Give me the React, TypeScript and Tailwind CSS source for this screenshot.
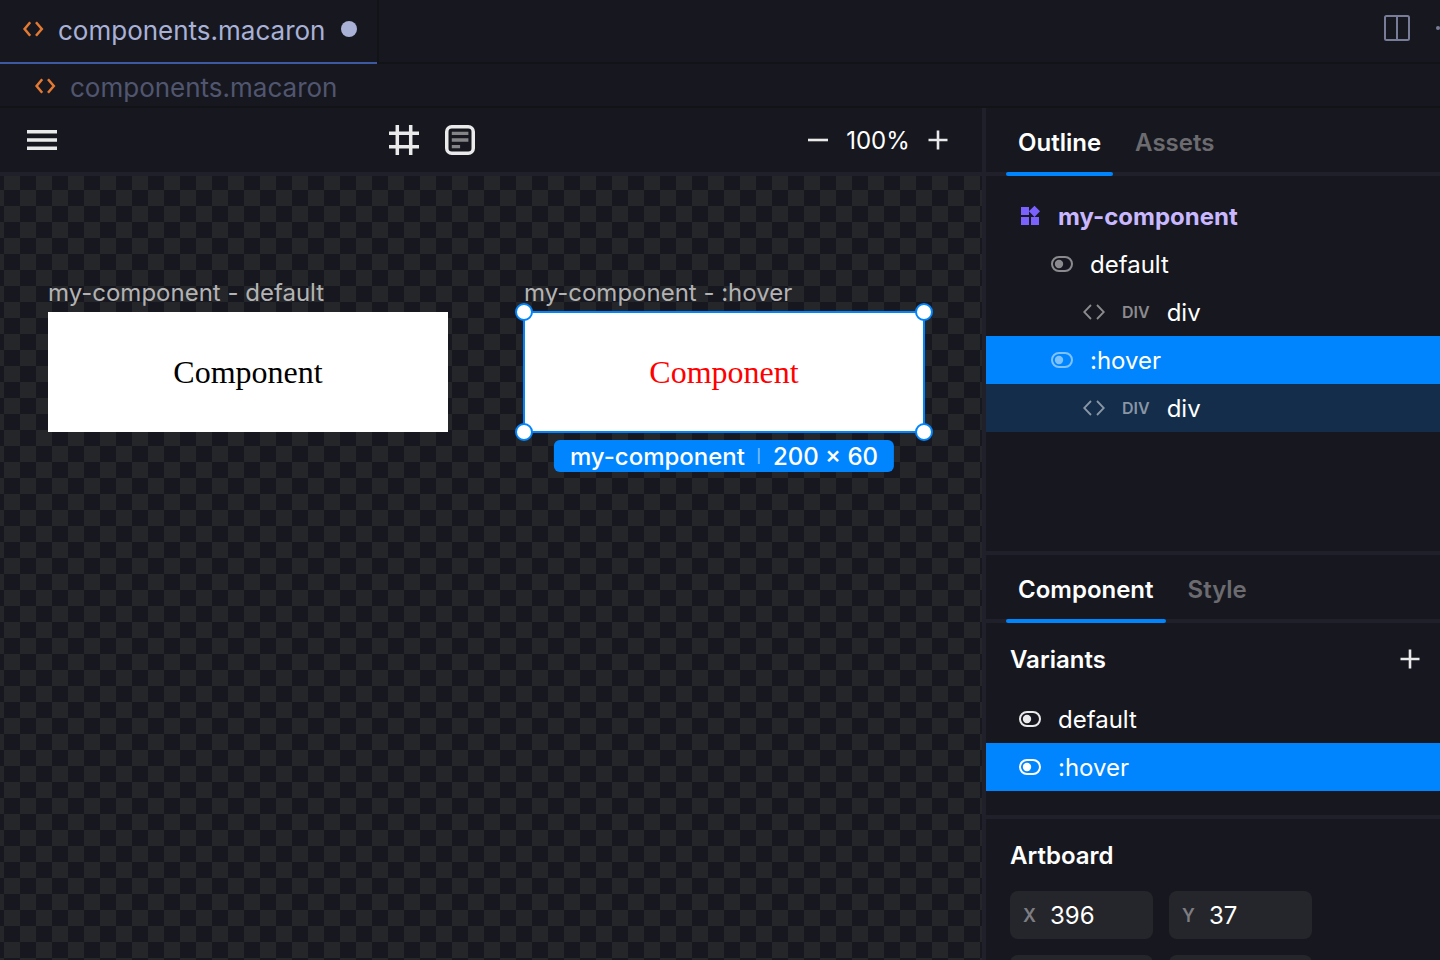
import React from "react";

type IconProps = { className?: string };

function CodeIcon({ className = "" }: IconProps) {
  return (
    <svg width="22" height="16" viewBox="0 0 22 16" fill="none" stroke="currentColor" strokeWidth="2.5" className={className} aria-hidden="true">
      <path d="M8.2 1.2 2.6 8l5.6 6.8M14 1.2 19.8 8 14 14.8" />
    </svg>
  );
}

function TagIcon({ className = "" }: IconProps) {
  return (
    <svg width="22" height="16" viewBox="0 0 22 16" fill="none" stroke="currentColor" strokeWidth="1.8" className={className} aria-hidden="true">
      <path d="M8 1 1.2 8 8 15M14 1 20.8 8 14 15" />
    </svg>
  );
}

function MenuIcon() {
  return (
    <svg width="30" height="30" viewBox="0 0 30 30" fill="currentColor" aria-hidden="true">
      <path d="M0 5h30v3.5H0zM0 13.2h30v3.6H0zM0 21.5h30V25H0z" />
    </svg>
  );
}

function FrameIcon() {
  return (
    <svg width="30" height="30" viewBox="0 0 30 30" stroke="currentColor" strokeWidth="3.5" aria-hidden="true">
      <path d="M8.3 0v30M21.7 0v30M0 8.3h30M0 21.7h30" />
    </svg>
  );
}

function TextBlockIcon() {
  return (
    <svg width="30" height="30" viewBox="0 0 30 30" fill="none" aria-hidden="true">
      <rect x="1.75" y="1.75" width="26.5" height="26.5" rx="5" stroke="currentColor" strokeWidth="3.5" />
      <path d="M6.8 8.4h16.6M6.8 15h16.6M6.8 21.6h8.3" stroke="#848487" strokeWidth="3.3" />
    </svg>
  );
}

function MinusIcon() {
  return (
    <svg width="20" height="20" viewBox="0 0 20 20" stroke="currentColor" strokeWidth="2.6" aria-hidden="true">
      <path d="M0 10h20" />
    </svg>
  );
}

function PlusIcon() {
  return (
    <svg width="20" height="20" viewBox="0 0 20 20" stroke="currentColor" strokeWidth="2.6" aria-hidden="true">
      <path d="M.5 10h19M10 .5v19" />
    </svg>
  );
}

function SplitIcon() {
  return (
    <svg width="26" height="26" viewBox="0 0 26 26" fill="none" stroke="currentColor" strokeWidth="2" aria-hidden="true">
      <rect x="1" y="1" width="24" height="24" rx="1.5" />
      <path d="M13 1v24" />
    </svg>
  );
}

function ComponentIcon() {
  return (
    <svg width="22" height="22" viewBox="0 0 22 22" fill="#7b61ff" aria-hidden="true">
      <path d="M3 2h8v8H3zM3 12h8v8H3zM13 12h8v8h-8zM16.5.7l5.5 5.6-5.5 5.6-5.6-5.6z" />
    </svg>
  );
}

function VariantIcon({ className = "" }: IconProps) {
  return (
    <svg width="22" height="16" viewBox="0 0 22 16" fill="none" className={className} aria-hidden="true">
      <rect x="1" y="1" width="20" height="14" rx="7" stroke="currentColor" strokeWidth="2" />
      <circle cx="8" cy="8" r="4.2" fill="currentColor" />
    </svg>
  );
}

function PaneTabs({ tabs }: { tabs: string[] }) {
  return (
    <div role="tablist" className="flex h-[68px] shrink-0 border-b-4 border-[#1f2029] pl-5 text-2xl font-semibold">
      {tabs.map((tab, i) => (
        <button
          key={tab}
          role="tab"
          aria-selected={i === 0}
          className={
            i === 0
              ? "relative mr-2.5 h-[68px] px-3 pt-0.5 text-white after:absolute after:inset-x-0 after:bottom-0 after:h-1 after:rounded-sm after:bg-[#0085ff]"
              : "h-[68px] px-3 pt-0.5 text-[#6b6b70]"
          }
        >
          {tab}
        </button>
      ))}
    </div>
  );
}

function NumberField({ label, value }: { label: string; value: number }) {
  return (
    <label className="flex h-12 items-center rounded-lg bg-[#25262b] px-[13px] pt-0.5">
      <span className="w-[27px] shrink-0 text-lg font-semibold text-[#7d7d82]">{label}</span>
      <input defaultValue={value} className="w-full min-w-0 bg-transparent text-2xl text-white outline-none" />
    </label>
  );
}

function Artboard({ name, textClass, className }: { name: string; textClass: string; className: string }) {
  return (
    <div className={`absolute w-[400px] ${className}`}>
      <div className="h-[38px] text-2xl leading-[38px] whitespace-nowrap text-[#b3b3b4]">{name}</div>
      <div className={`flex h-[120px] items-center justify-center bg-white font-['Liberation_Serif',serif] text-[32px] ${textClass}`}>
        Component
      </div>
    </div>
  );
}

function Handle({ className }: { className: string }) {
  return <span className={`absolute size-[18px] rounded-full border-2 border-[#0085ff] bg-white ${className}`} />;
}

const treeRow = "flex h-12 w-full items-center text-2xl text-white";

export default function App() {
  return (
    <div className="flex h-screen flex-col overflow-hidden bg-[#17181f] font-['Inter',sans-serif] text-[#eaeaea]">
      <header className="flex h-16 shrink-0 border-b-2 border-[#121316]">
        <div className="flex h-16 items-center border-b-2 border-[#3d59a1] pr-5 pb-1 pl-[22px] text-[26px] text-[#a9b1d6]">
          <CodeIcon className="mr-3.5 text-[#e37933]" />
          <span className="pt-0.5">components.macaron</span>
          <button aria-label="Close" className="ml-4 size-4 rounded-full bg-[#a9b1d6]" />
        </div>
        <div className="w-0.5 bg-[#121316]" />
        <div className="flex flex-1 items-center justify-end gap-[26px] pb-1.5 text-[#787c99]">
          <button aria-label="Split editor">
            <SplitIcon />
          </button>
          <button aria-label="More actions">
            <svg width="4" height="4" viewBox="0 0 4 4" fill="currentColor" aria-hidden="true">
              <circle cx="2" cy="2" r="2" />
            </svg>
          </button>
        </div>
      </header>

      <nav aria-label="Breadcrumb" className="flex h-11 shrink-0 items-center border-b-2 border-[#121316] pt-0.5 pl-[34px] text-[26px] text-[#515670]">
        <CodeIcon className="mr-3.5 text-[#e37933]" />
        <span className="pt-0.5">components.macaron</span>
      </nav>

      <div className="flex min-h-0 flex-1">
        <main className="flex min-w-0 flex-1 flex-col">
          <div className="flex h-[68px] shrink-0 items-center justify-between border-b-4 border-[#1f2029] pr-[34px] pl-[27px]">
            <button aria-label="Menu">
              <MenuIcon />
            </button>
            <div className="flex gap-[26px] pr-px">
              <button aria-label="Add frame">
                <FrameIcon />
              </button>
              <button aria-label="Add text">
                <TextBlockIcon />
              </button>
            </div>
            <div className="flex w-[140px] items-center justify-between">
              <button aria-label="Zoom out">
                <MinusIcon />
              </button>
              <span className="pt-0.5 text-2xl text-white">100%</span>
              <button aria-label="Zoom in">
                <PlusIcon />
              </button>
            </div>
          </div>

          <div className="relative flex-1 overflow-hidden bg-[repeating-conic-gradient(#17181f_0_25%,#25262a_0_50%)] bg-[length:32px_32px] bg-[position:4px_-2px]">
            <Artboard name="my-component - default" textClass="text-black" className="top-[98px] left-12" />
            <Artboard name="my-component - :hover" textClass="text-[#ff0000]" className="top-[98px] left-[524px]" />
            <div className="absolute top-[135px] left-[523px] h-[122px] w-[402px] border-2 border-[#0085ff]">
              <Handle className="-top-2.5 -left-2.5" />
              <Handle className="-top-2.5 -right-2.5" />
              <Handle className="-bottom-2.5 -left-2.5" />
              <Handle className="-right-2.5 -bottom-2.5" />
              <div className="absolute top-[127px] left-1/2 flex h-8 -translate-x-1/2 items-center rounded-md bg-[#0085ff] px-4 text-2xl font-medium whitespace-nowrap text-white">
                <span className="pt-0.5">my-component</span>
                <span className="mx-[13px] h-4 w-0.5 bg-[#66b6ff]" />
                <span className="pt-0.5">200 × 60</span>
              </div>
            </div>
          </div>
        </main>

        <aside className="flex w-[458px] shrink-0 flex-col border-l-4 border-[#1f2029]">
          <section className="flex h-[443px] shrink-0 flex-col">
            <PaneTabs tabs={["Outline", "Assets"]} />
            <ul className="pt-4">
              <li>
                <button className="flex h-12 w-full items-center gap-[18px] pl-8 text-2xl font-bold text-[#c9b8ff]">
                  <ComponentIcon />
                  <span className="pt-0.5">my-component</span>
                </button>
              </li>
              <li>
                <button className={`${treeRow} gap-[17px] pl-[65px]`}>
                  <VariantIcon className="text-[#8b8b8f]" />
                  <span className="pt-0.5">default</span>
                </button>
              </li>
              <li>
                <button className={`${treeRow} pl-[97px]`}>
                  <TagIcon className="mr-[17px] text-[#8b8b8f]" />
                  <span className="mr-[17px] text-base font-semibold text-[#8b8b8f]">DIV</span>
                  <span className="pt-0.5">div</span>
                </button>
              </li>
              <li>
                <button className={`${treeRow} gap-[17px] bg-[#0085ff] pl-[65px]`}>
                  <VariantIcon className="text-[#80c2ff]" />
                  <span className="pt-0.5">:hover</span>
                </button>
              </li>
              <li>
                <button className={`${treeRow} bg-[#132d4b] pl-[97px]`}>
                  <TagIcon className="mr-[17px] text-[#8996a5]" />
                  <span className="mr-[17px] text-base font-semibold text-[#8996a5]">DIV</span>
                  <span className="pt-0.5">div</span>
                </button>
              </li>
            </ul>
          </section>

          <section className="flex min-h-0 flex-1 flex-col overflow-hidden border-t-4 border-[#1f2029]">
            <PaneTabs tabs={["Component", "Style"]} />
            <div className="shrink-0 border-b-4 border-[#1f2029] pb-6">
              <div className="flex h-[72px] items-center justify-between pr-5 pl-6">
                <h2 className="pt-0.5 text-2xl font-semibold text-white">Variants</h2>
                <button aria-label="Add variant">
                  <PlusIcon />
                </button>
              </div>
              <button className={`${treeRow} gap-[17px] pl-[33px]`}>
                <VariantIcon className="text-[#eaeaea]" />
                <span className="pt-0.5">default</span>
              </button>
              <button className={`${treeRow} gap-[17px] bg-[#0085ff] pl-[33px]`}>
                <VariantIcon />
                <span className="pt-0.5">:hover</span>
              </button>
            </div>
            <div className="shrink-0 px-6">
              <h2 className="flex h-[72px] items-center pt-0.5 text-2xl font-semibold text-white">Artboard</h2>
              <div className="grid grid-cols-[143px_143px] gap-4">
                <NumberField label="X" value={396} />
                <NumberField label="Y" value={37} />
                <input aria-label="Width" className="h-12 rounded-lg bg-[#25262b] px-[13px] text-2xl text-white outline-none" />
                <input aria-label="Height" className="h-12 rounded-lg bg-[#25262b] px-[13px] text-2xl text-white outline-none" />
              </div>
            </div>
          </section>
        </aside>
      </div>
    </div>
  );
}
